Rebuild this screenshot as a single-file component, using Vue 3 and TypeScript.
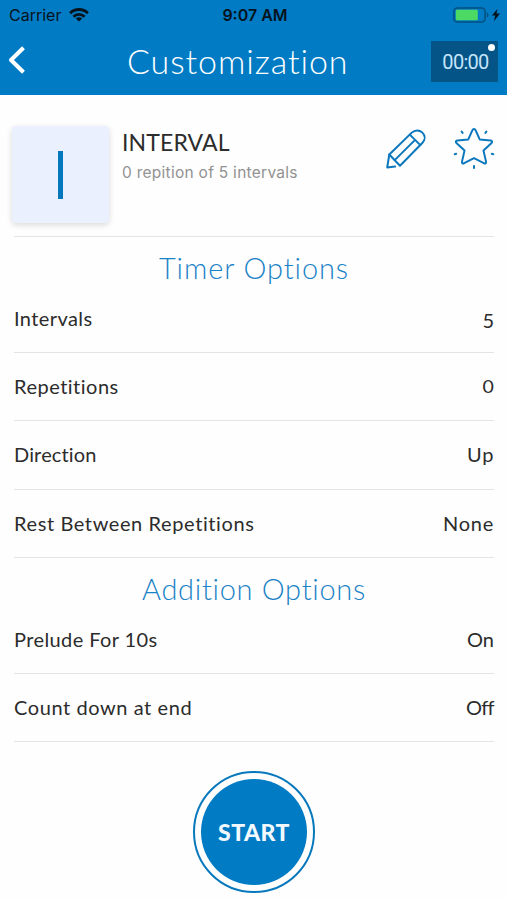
<script setup lang="ts">
interface Option {
  label: string
  value: string
  tracking: string
  valueClass?: string
}

interface Section {
  title: string
  name: string
  options: Option[]
}

const sections: Section[] = [
  {
    title: 'Timer Options',
    name: 'timer',
    options: [
      { label: 'Intervals', value: '5', tracking: '0.4px', valueClass: 'low' },
      { label: 'Repetitions', value: '0', tracking: '0.5px', valueClass: 'small' },
      { label: 'Direction', value: 'Up', tracking: '0.15px', valueClass: 'wide' },
      { label: 'Rest Between Repetitions', value: 'None', tracking: '0.6px', valueClass: 'wide' },
    ],
  },
  {
    title: 'Addition Options',
    name: 'addition',
    options: [
      { label: 'Prelude For 10s', value: 'On', tracking: '0.4px' },
      { label: 'Count down at end', value: 'Off', tracking: '0.58px', valueClass: 'tight' },
    ],
  },
]
</script>

<template>
  <div class="screen">
    <header class="header">
      <div class="status">
        <div class="carrier">
          <span>Carrier</span>
          <svg width="20" height="14" viewBox="0 0 20 14" fill="none" stroke="#06131d" stroke-width="2.8">
            <path d="M1.1 5.2a12.6 12.6 0 0 1 17.800 0" />
            <path d="M4.400 8.700a7.900 7.900 0 0 1 11.200 0" />
            <path d="M10 13.600 6.800 10.600a4.500 4.500 0 0 1 6.400 0z" fill="#06131d" stroke="none" />
          </svg>
        </div>
        <span class="time">9:07 AM</span>
        <svg class="battery" width="48" height="18" viewBox="0 0 48 18">
          <rect x=".9" y="1.9" width="31.2" height="14.2" rx="3.5" fill="none" stroke="#05507f" stroke-width="1.5" />
          <rect x="2.8" y="3.8" width="22" height="10.4" rx="1.2" fill="#4cd964" />
          <path d="M33.8 6.5c2.2.7 2.2 4.3 0 5z" fill="#05507f" />
          <path d="M44.4 3 38.900 9.600h3.300l-1.300 5.600 6.100-7.700h-3.500z" fill="#06131d" />
        </svg>
      </div>
      <div class="nav">
        <svg class="back" width="18" height="30" viewBox="0 0 18 30" fill="none" stroke="#fff" stroke-width="4">
          <path d="M15.5 2.7 3 15l12.5 12.3" stroke-linejoin="round" />
        </svg>
        <h1>Customization</h1>
        <div class="clock"><span>00:00</span><i class="dot"></i></div>
      </div>
    </header>

    <main>
      <section class="summary">
        <div class="tile"><i class="bar"></i></div>
        <div class="info">
          <h2>INTERVAL</h2>
          <p>0 repition of 5 intervals</p>
        </div>
        <svg class="pencil" width="42" height="42" viewBox="0 0 42 42" fill="none" stroke="#0b78bd" stroke-width="2" stroke-linejoin="round" stroke-linecap="round">
          <path d="M4.300 26.500 26.800 4.600c3-2.900 7.500-3 10.600 0s2.800 7.300-.1 10.400L15 37.700z" />
          <path d="M24.800 6.600 35.300 17.100M9.700 32.100 30.100 11.900M4.300 26.500 2.200 39.500l8-.9" />
        </svg>
        <svg class="star" width="42" height="42" viewBox="0 0 42 42" fill="none" stroke="#0b78bd" stroke-width="2" stroke-linejoin="round" stroke-linecap="round">
          <path d="M21 2c1 0 1.400.8 1.800 1.700l3.900 8.700 10.900 1.200c1.800.3 2 1.500.7 2.700l-7.800 7.300 2.500 11c.3 1.700-.8 2.300-2.200 1.500L21 31.200l-9.800 4.900c-1.400.8-2.500.2-2.200-1.500l2.500-11-7.800-7.300c-1.300-1.200-1.100-2.400.7-2.700l10.900-1.200L19.200 3.700c.4-.9.8-1.700 1.800-1.700z" />
          <path d="m8.600 4.500 1 1.400M33.400 4.500l-1 1.400M1.700 27.300l1.500-.5M40.300 27.300l-1.500-.5M21 39v2" />
        </svg>
      </section>

      <section v-for="section in sections" :key="section.name">
        <h3 :class="section.name">{{ section.title }}</h3>
        <div v-for="option in section.options" :key="option.label" class="row">
          <span :style="{ letterSpacing: option.tracking }">{{ option.label }}</span>
          <span :class="['value', option.valueClass]">{{ option.value }}</span>
        </div>
      </section>

      <button class="start" type="button"><span>START</span></button>
    </main>
  </div>
</template>

<style>
body {
  background: #fefefe;
}
</style>

<style scoped>
.screen {
  width: 507px;
  height: 900px;
  overflow: hidden;
  background: #fefefe;
  font-family: Lato, "Liberation Sans", sans-serif;
  font-variant-ligatures: none;
  color: #2c2c2c;
}
h1, h2, h3, p {
  margin: 0;
  font-weight: 300;
}
svg {
  display: block;
}
.header {
  height: 95px;
  background: #017bc4;
}
.status {
  display: grid;
  grid-template-columns: 1fr auto 1fr;
  align-items: center;
  height: 30px;
  padding: 0 6px 0 9px;
  font: 17px/30px Inter, sans-serif;
  color: #06131d;
}
.carrier {
  display: flex;
  align-items: center;
  gap: 8px;
  font-size: 16px;
}
.time {
  font-size: 16px;
  font-weight: 600;
}
.battery {
  justify-self: end;
}
.nav {
  display: grid;
  grid-template-columns: 76px 1fr 67px;
  align-items: center;
  height: 65px;
  padding: 0 9px 0 8px;
  color: #fff;
}
.back {
  margin-bottom: 6px;
}
.nav h1 {
  margin: 0 0 4px 43px;
  font-size: 34px;
  line-height: 60px;
  letter-spacing: 0.92px;
  white-space: nowrap;
}
.clock {
  position: relative;
  height: 41px;
  margin-bottom: 2px;
  padding-left: 2px;
  box-sizing: border-box;
  background: #045488;
  color: #c5e5fa;
  text-align: center;
  font: 20px/43px Roboto, sans-serif;
  letter-spacing: -0.7px;
}
.dot {
  position: absolute;
  top: 3px;
  right: 3px;
  width: 7px;
  height: 7px;
  border-radius: 50%;
  background: #fff;
}
main {
  padding: 0 13px 0 14px;
}
.summary {
  display: flex;
  align-items: flex-start;
  height: 141px;
  border-bottom: 1px solid #e4e4e4;
}
.tile {
  display: flex;
  align-items: center;
  justify-content: center;
  width: 97px;
  height: 97px;
  margin: 31px 13px 0 -2px;
  border-radius: 4px;
  background: #ebf0fe;
  box-shadow: 0 2px 6px rgba(0, 0, 0, 0.15);
}
.bar {
  width: 5px;
  height: 48px;
  background: #0577bc;
}
.info {
  width: 263px;
  padding-top: 33px;
}
.info h2 {
  font-size: 23px;
  line-height: 28px;
  font-weight: 400;
  letter-spacing: 0.15px;
}
.info p {
  margin-top: 6px;
  font: 15.5px/22px Inter, sans-serif;
  letter-spacing: 0.27px;
  color: #929292;
}
.pencil {
  margin: 33px 26px 0 0;
}
.star {
  margin: 32px -1px 0 0;
}
h3 {
  height: 48px;
  text-align: center;
  font-size: 29px;
  line-height: 62px;
  color: #1b82c6;
}
.timer {
  letter-spacing: 0.9px;
}
.addition {
  letter-spacing: 0.7px;
}
.row {
  display: flex;
  justify-content: space-between;
  height: 67.2px;
  border-bottom: 1px solid #e4e4e4;
  font-size: 20px;
  line-height: 66px;
}
.low {
  padding-top: 2px;
}
.small {
  font-size: 17px;
  padding-top: 1px;
  transform: scaleX(1.15);
  transform-origin: right;
}
.wide {
  letter-spacing: 0.8px;
  margin-right: -0.2px;
}
.tight {
  letter-spacing: -0.7px;
  margin-right: 0.2px;
}
.start {
  display: flex;
  box-sizing: border-box;
  width: 122px;
  height: 122px;
  margin: 29px auto 0;
  padding: 6px;
  border: 2px solid #0878bd;
  border-radius: 50%;
  background: #fefefe;
}
.start span {
  flex: 1;
  border-radius: 50%;
  background: #017bc4;
  color: #f2faff;
  font: 900 23px/106px Lato, sans-serif;
  letter-spacing: 0.5px;
}
</style>
